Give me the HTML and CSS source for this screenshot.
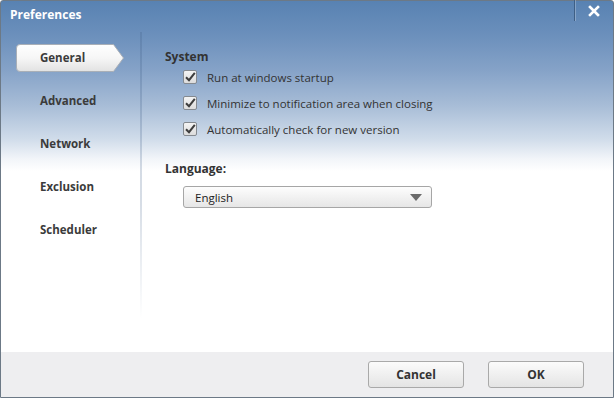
FILE: index.html
```html
<!DOCTYPE html>
<html>
<head>
<meta charset="utf-8">
<link rel="stylesheet" href="styles.css">
</head>
<body>
<div class="window">
  <div class="titlebar">
    <div class="title">Preferences</div>
    <div class="close">
      <svg width="12" height="12" viewBox="0 0 12 12"><path d="M2 2 L10 10 M10 2 L2 10" stroke="#fff" stroke-width="2.6" stroke-linecap="square"/></svg>
    </div>
  </div>
  <div class="main">
    <div class="sidebar">
      <div class="nav-item active">
        <svg class="tab-shape" width="109" height="29" viewBox="0 0 109 29">
          <defs>
            <linearGradient id="tg" x1="0" y1="0" x2="0" y2="1">
              <stop offset="0" stop-color="#ffffff"/>
              <stop offset="0.5" stop-color="#f6f6f6"/>
              <stop offset="1" stop-color="#e2e2e2"/>
            </linearGradient>
          </defs>
          <path d="M4 0.5 H97.5 L107.5 14 L97.5 27.5 H4 Q0.5 27.5 0.5 24 V4 Q0.5 0.5 4 0.5 Z" fill="url(#tg)" stroke="#a9afb7" stroke-width="1"/>
        </svg>
        <span>General</span>
      </div>
      <div class="nav-item"><span>Advanced</span></div>
      <div class="nav-item"><span>Network</span></div>
      <div class="nav-item"><span>Exclusion</span></div>
      <div class="nav-item"><span>Scheduler</span></div>
    </div>
    <div class="divider"></div>
    <div class="content">
      <div class="heading">System</div>
      <div class="options">
        <div class="option">
          <span class="checkbox"><svg width="12" height="12" viewBox="0 0 12 12"><path d="M2 6.2 L5 9.2 L10.8 1.8" fill="none" stroke="#3d3d3d" stroke-width="2"/></svg></span>
          <span class="label">Run at windows startup</span>
        </div>
        <div class="option">
          <span class="checkbox"><svg width="12" height="12" viewBox="0 0 12 12"><path d="M2 6.2 L5 9.2 L10.8 1.8" fill="none" stroke="#3d3d3d" stroke-width="2"/></svg></span>
          <span class="label">Minimize to notification area when closing</span>
        </div>
        <div class="option">
          <span class="checkbox"><svg width="12" height="12" viewBox="0 0 12 12"><path d="M2 6.2 L5 9.2 L10.8 1.8" fill="none" stroke="#3d3d3d" stroke-width="2"/></svg></span>
          <span class="label">Automatically check for new version</span>
        </div>
      </div>
      <div class="heading lang-heading">Language:</div>
      <div class="select">
        <span>English</span>
        <svg width="12" height="7" viewBox="0 0 12 7"><path d="M0 0 H12 L6 7 Z" fill="#6a6a6a"/></svg>
      </div>
    </div>
  </div>
  <div class="footer">
    <button class="btn">Cancel</button>
    <button class="btn">OK</button>
  </div>
</div>
</body>
</html>
```

FILE: styles.css
```css
html, body {
  margin: 0;
  padding: 0;
}
body {
  width: 614px;
  height: 398px;
  overflow: hidden;
  font-family: "Open Sans", "Noto Sans", sans-serif;
  font-size: 11.5px;
  color: #333;
}
.window {
  box-sizing: border-box;
  width: 614px;
  height: 398px;
  border: 1px solid #6c7986;
  border-radius: 3px 3px 0 0;
  display: flex;
  flex-direction: column;
  background: linear-gradient(to bottom,
    #5882b2 0px,
    #6c90bc 35px,
    #86a3c8 70px,
    #a8bdd7 105px,
    #d0dcea 138px,
    #f2f5f9 158px,
    #ffffff 170px);
}
.titlebar {
  height: 29px;
  display: flex;
  align-items: flex-start;
  justify-content: space-between;
}
.title {
  color: #fff;
  font-weight: 700;
  font-size: 12px;
  padding-left: 9px;
  line-height: 28px;
}
.close {
  width: 38px;
  height: 20px;
  border-left: 1px solid #3e5f85;
  box-shadow: inset 1px 0 0 rgba(255,255,255,0.25);
  display: flex;
  align-items: center;
  justify-content: center;
  margin-top: -1px;
  padding-top: 1px;
}
.main {
  flex: 1;
  display: flex;
}
.sidebar {
  width: 139px;
  padding-top: 14px;
}
.nav-item {
  position: relative;
  height: 27px;
  margin-bottom: 16px;
  display: flex;
  align-items: center;
  padding-left: 39px;
  font-weight: 700;
  color: #3b3b3b;
}
.nav-item span {
  position: relative;
}
.tab-shape {
  position: absolute;
  left: 15px;
  top: 0;
}
.divider {
  width: 2px;
  margin-top: 2px;
  height: 287px;
  background: linear-gradient(to bottom,
    rgba(70, 100, 140, 0.28) 0%,
    rgba(70, 100, 140, 0.22) 60%,
    rgba(70, 100, 140, 0.0) 100%);
}
.content {
  flex: 1;
  padding-left: 23px;
  padding-top: 19px;
}
.heading {
  font-weight: 700;
  font-size: 12px;
  line-height: 16px;
  color: #333;
}
.options {
  padding-left: 18px;
  margin-top: -1px;
}
.option {
  display: flex;
  align-items: center;
  height: 26px;
}
.checkbox {
  box-sizing: border-box;
  width: 14px;
  height: 14px;
  border: 1px solid #858a90;
  border-radius: 2px;
  background: linear-gradient(#f4f4f4, #dcdcdc);
  display: flex;
  align-items: center;
  justify-content: center;
  margin-right: 10px;
}
.label {
  color: #333;
}
.lang-heading {
  margin-top: 19px;
}
.select {
  box-sizing: border-box;
  margin-left: 18px;
  margin-top: 9px;
  width: 249px;
  height: 22px;
  border: 1px solid #a6a6a6;
  border-radius: 3px;
  background: linear-gradient(#fdfdfd, #e6e6e6);
  display: flex;
  align-items: center;
  justify-content: space-between;
  padding: 0 9px 0 11px;
  color: #222;
}
.footer {
  height: 45px;
  background: #eeeef0;
  display: flex;
  justify-content: flex-end;
  align-items: flex-start;
  padding-top: 9px;
  padding-right: 29px;
  box-sizing: border-box;
  gap: 24px;
}
.btn {
  width: 96px;
  height: 27px;
  border: 1px solid #a9a9a9;
  border-radius: 3px;
  background: linear-gradient(#fbfbfb, #e4e4e4);
  font-family: "Open Sans", "Noto Sans", sans-serif;
  font-weight: 700;
  font-size: 12px;
  color: #333;
  padding: 0;
}
```
